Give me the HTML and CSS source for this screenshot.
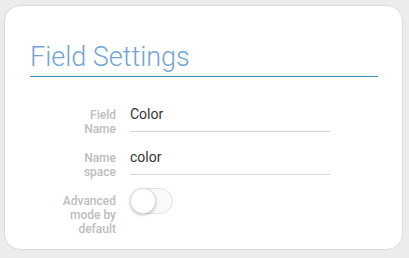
FILE: index.html
```html
<!DOCTYPE html>
<html lang="en">

<head>
    <meta charset="UTF-8">
    <meta name="viewport" content="width=device-width, initial-scale=1.0">
    <title>Field Settings</title>
    <link rel="stylesheet" href="styles.css">
</head>

<body>
    <section class="card">
        <h2 class="card-title">Field Settings</h2>

        <div class="form-row row-name">
            <label class="field-label">Field<br>Name</label>
            <div class="field-input">Color</div>
        </div>

        <div class="form-row row-space">
            <label class="field-label">Name<br>space</label>
            <div class="field-input">color</div>
        </div>

        <div class="form-row row-mode">
            <label class="field-label">Advanced<br>mode by<br>default</label>
            <div class="toggle">
                <span class="toggle-knob"></span>
            </div>
        </div>
    </section>
</body>

</html>
```

FILE: styles.css
```css
body {
    font-family: 'Roboto', sans-serif;
    margin: 0;
    background: #ececec;
    width: 409px;
    height: 258px;
    overflow: hidden;
}

.card {
    box-sizing: border-box;
    width: 399px;
    height: 245px;
    margin: 5px 0 0 4px;
    background: #fff;
    border: 1px solid #dadada;
    border-radius: 16px;
    padding: 36px 24px 0 25px;
}

.card-title {
    margin: 0 0 29px;
    font-size: 27px;
    font-weight: 300;
    line-height: 30px;
    color: #72a5d6;
    padding-bottom: 4px;
    border-bottom: 1px solid #3a8dbb;
}

.form-row {
    display: grid;
    grid-template-columns: 86px 200px;
    column-gap: 14px;
    align-items: start;
}

.row-space {
    margin-top: 13px;
}

.row-mode {
    margin-top: 9px;
}

.field-label {
    font-size: 12px;
    font-weight: 500;
    line-height: 14px;
    color: #bdbdbd;
    text-align: right;
    margin-top: 2px;
}

.row-mode .field-label {
    margin-top: 6px;
}

.field-input {
    font-size: 14px;
    line-height: 16px;
    color: #333;
    padding-bottom: 9px;
    border-bottom: 1px solid #d4d4d4;
}

.toggle {
    position: relative;
    box-sizing: border-box;
    width: 43px;
    height: 26px;
    border: 1px solid #e2e2e2;
    border-radius: 13px;
    background: #fafafa;
}

.toggle-knob {
    position: absolute;
    top: -1px;
    left: -1px;
    box-sizing: border-box;
    width: 26px;
    height: 26px;
    border-radius: 50%;
    background: #fff;
    border: 1px solid #e0e0e0;
    box-shadow: 0 1px 3px rgba(0, 0, 0, 0.25);
}
```
